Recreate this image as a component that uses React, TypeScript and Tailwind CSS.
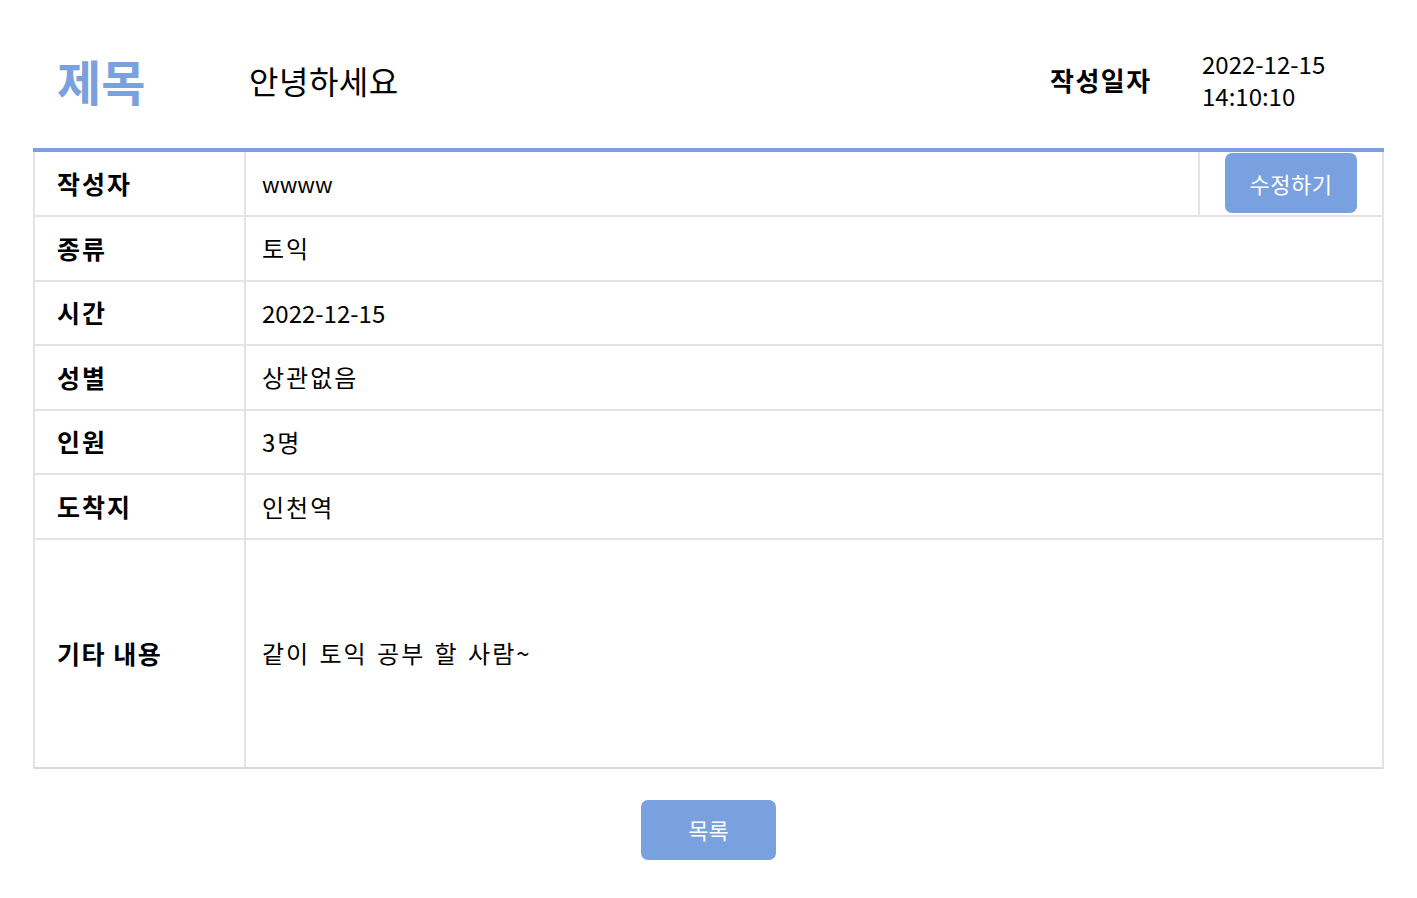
import React from 'react'

const rows = [
  { label: '종류', value: '토익', ko: true },
  { label: '시간', value: '2022-12-15', ko: false },
  { label: '성별', value: '상관없음', ko: true },
  { label: '인원', value: '3명', ko: true },
  { label: '도착지', value: '인천역', ko: true },
]

export default function App() {
  return (
    <div className="min-h-screen bg-white px-[33px] text-black" style={{ fontFamily: '"Noto Sans CJK KR", "Noto Sans", sans-serif' }}>
      {/* header */}
      <div className="flex h-[148px] items-center pt-[12px]">
        <div className="w-[216px] pl-[24px] text-[48px] font-bold leading-none text-[#79a1e0]">제목</div>
        <div className="flex-1 text-[32px] leading-none tracking-[0.5px]">안녕하세요</div>
        <div className="w-[152px] text-[26px] font-bold leading-none tracking-[1.5px]">작성일자</div>
        <div className="w-[182px] text-[24px] leading-[32px]">
          <div>2022-12-15</div>
          <div>14:10:10</div>
        </div>
      </div>

      <div className="border-t-4 border-[#79a1e0]">
        <div className="border-x-2 border-[#e3e3e3]">
          <div className="flex h-[65px] border-b-2 border-[#e3e3e3]">
            <div className="flex w-[211px] items-center border-r-2 border-[#e3e3e3] pl-[22px] text-[25px] font-bold tracking-[2px]">작성자</div>
            <div className="flex flex-1 items-center border-r-2 border-[#e3e3e3] pl-[16px] text-[22px]">wwww</div>
            <div className="flex w-[182px] items-center justify-center pb-[1px]">
              <button className="h-[60px] w-[132px] rounded-[7px] bg-[#79a1e0] text-[22px] tracking-[0.5px] text-white">수정하기</button>
            </div>
          </div>
          {rows.map((r) => (
            <div key={r.label} className="flex h-[64.6px] border-b-2 border-[#e3e3e3]">
              <div className="flex w-[211px] items-center border-r-2 border-[#e3e3e3] pl-[22px] text-[25px] font-bold tracking-[2px]">{r.label}</div>
              <div className={r.ko ? 'flex flex-1 items-center pl-[16px] text-[24px] tracking-[2px]' : 'flex flex-1 items-center pl-[16px] text-[24px]'}>{r.value}</div>
            </div>
          ))}
          <div className="flex h-[229px] border-b-2 border-[#d9d9d9]">
            <div className="flex w-[211px] items-center border-r-2 border-[#e3e3e3] pl-[22px] text-[25px] font-bold tracking-[1.5px]">기타 내용</div>
            <div className="flex flex-1 items-center pl-[16px] text-[24px] tracking-[2px] [word-spacing:2px]">같이 토익 공부 할 사람~</div>
          </div>
        </div>
      </div>

      <div className="flex justify-center pt-[31px]">
        <button className="h-[60px] w-[135px] rounded-[7px] bg-[#79a1e0] text-[22px] text-white">목록</button>
      </div>
    </div>
  )
}
